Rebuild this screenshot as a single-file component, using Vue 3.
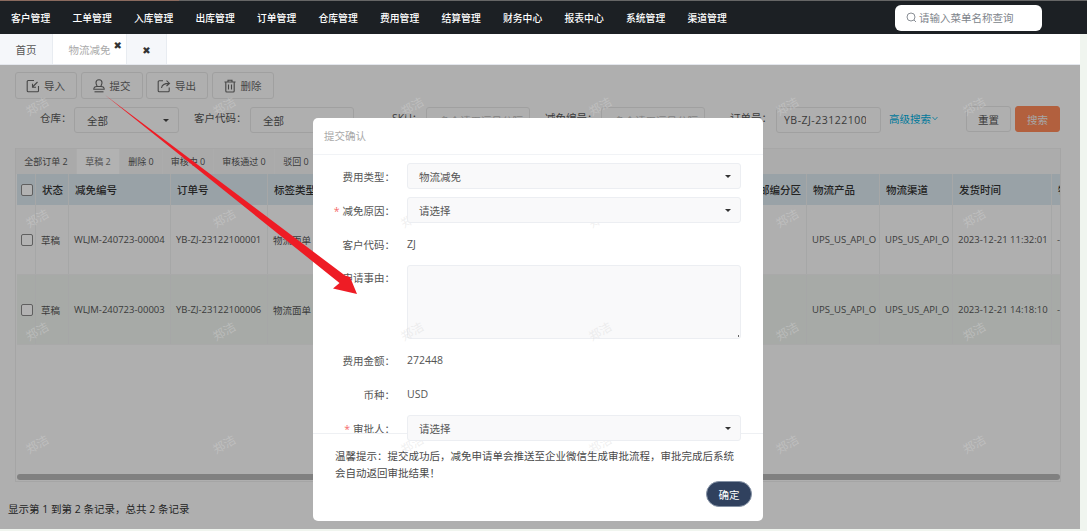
<script setup>
const menus = ['客户管理','工单管理','入库管理','出库管理','订单管理','仓库管理','费用管理','结算管理','财务中心','报表中心','系统管理','渠道管理']
const statusTabs = [
  { t: '全部订单 2', w: 60 }, { t: '草稿 2', w: 42, on: true }, { t: '删除 0', w: 42 },
  { t: '审核中 0', w: 50 }, { t: '审核通过 0', w: 60 }, { t: '驳回 0', w: 42 }
]
const cols = [
  { k: 'check', w: 19 }, { t: '状态', w: 33 }, { t: '减免编号', w: 102 }, { t: '订单号', w: 97 },
  { t: '标签类型', w: 77 }, { t: '', w: 130 }, { t: '', w: 130 }, { t: '', w: 127 },
  { t: '收件邮编分区', w: 75 }, { t: '物流产品', w: 73 }, { t: '物流渠道', w: 73 }, { t: '发货时间', w: 99 }, { t: '物', w: 20 }
]
const rows = [
  ['', '草稿', 'WLJM-240723-00004', 'YB-ZJ-23122100001', '物流面单', '', '', '', '', 'UPS_US_API_O', 'UPS_US_API_O', '2023-12-21 11:32:01', '-'],
  ['', '草稿', 'WLJM-240723-00003', 'YB-ZJ-23122100006', '物流面单', '', '', '', '', 'UPS_US_API_O', 'UPS_US_API_O', '2023-12-21 14:18:10', '-']
]
const marks = []
for (const y of [106, 218, 331, 444]) {
  for (const x of [37, 224, 412, 600, 787, 974]) marks.push({ x, y })
}
</script>

<template>
  <div class="page">
    <header class="topbar">
      <nav class="menu">
        <span v-for="m in menus" :key="m" class="menu-item">{{ m }}</span>
      </nav>
      <div class="search">
        <svg width="11" height="11" viewBox="0 0 11 11" fill="none" stroke="#8a8f96" stroke-width="1"><circle cx="5" cy="5" r="4"/><path d="M8 8l2 2"/></svg>
        <span>请输入菜单名称查询</span>
      </div>
    </header>

    <div class="tabs">
      <span class="tab tab-home">首页</span>
      <span class="tab tab-active">物流减免<b class="x x-a">✖</b></span>
      <span class="tab tab-x"><b class="x">✖</b></span>
    </div>

    <main class="main">
      <div class="toolbar">
        <button class="tool">
          <svg width="14" height="14" viewBox="0 0 14 14" fill="none" stroke="#666" stroke-width="1.1"><path d="M8 1.500H2.200a1 1 0 0 0-1 1v9.300a1 1 0 0 0 1 1h9.300a1 1 0 0 0 1-1V7"/><path d="M11.500 3L6.500 8M6.500 4.800V8.300H10"/></svg>
          导入
        </button>
        <button class="tool">
          <svg width="14" height="14" viewBox="0 0 14 14" fill="none" stroke="#666" stroke-width="1.1"><path d="M5 7.500C5 6 4 5.500 4 3.800a3 3 0 0 1 6 0C10 5.500 9 6 9 7.500"/><path d="M1.800 10.300c0-1.700 1.200-2.800 3.200-2.800h4c2 0 3.200 1.100 3.200 2.800z"/><path d="M2.500 12.800h9"/></svg>
          提交
        </button>
        <button class="tool">
          <svg width="14" height="14" viewBox="0 0 14 14" fill="none" stroke="#666" stroke-width="1.1"><path d="M6 1.800H2.200a1 1 0 0 0-1 1v9a1 1 0 0 0 1 1h9a1 1 0 0 0 1-1V8.500"/><path d="M4.500 9c.5-3 3-4.600 7.500-4.600M9.500 1.700L12.500 4.400 9.500 7"/></svg>
          导出
        </button>
        <button class="tool">
          <svg width="14" height="14" viewBox="0 0 14 14" fill="none" stroke="#666" stroke-width="1.1"><path d="M1.500 3h11M5 3V1.300h4V3M2.800 3v9a1 1 0 0 0 1 1h6.400a1 1 0 0 0 1-1V3M5.500 5.500v5M8.500 5.500v5"/></svg>
          删除
        </button>
      </div>

      <div class="filters">
        <div class="field"><label class="l1">仓库&#xFF1A;</label><div class="box w105">全部<i class="caret"></i></div></div>
        <div class="field"><label class="l2">客户代码&#xFF1A;</label><div class="box w104">全部<i class="caret"></i></div></div>
        <div class="field"><label class="l3">SKU&#xFF1A;</label><div class="box w104 ph">多个请用逗号分隔</div></div>
        <div class="field"><label class="l2">减免编号&#xFF1A;</label><div class="box w104 ph">多个请用逗号分隔</div></div>
        <div class="field"><label class="l4">订单号&#xFF1A;</label><div class="box w105 clip"><span class="clip-in">YB-ZJ-23122100001</span></div></div>
        <a class="adv">高级搜索<svg width="6" height="5" viewBox="0 0 6 5" fill="none" stroke="#00aede" stroke-width=".8"><path d="M.5 1L3 3.800 5.500 1"/></svg></a>
        <div class="actions">
          <button class="btn">重置</button>
          <button class="btn primary">搜索</button>
        </div>
      </div>

      <section class="card">
        <div class="status-tabs">
          <span v-for="s in statusTabs" :key="s.t" class="stab" :class="{ on: s.on }" :style="{ width: s.w + 'px' }">{{ s.t }}</span>
        </div>
        <div class="table">
          <div class="tr th">
            <div v-for="(c, i) in cols" :key="i" class="cell" :style="{ width: c.w + 'px' }">
              <i v-if="c.k" class="chk"></i>{{ c.t }}
            </div>
          </div>
          <div v-for="(r, ri) in rows" :key="ri" class="tr td" :class="{ alt: ri === 1 }">
            <div v-for="(c, i) in cols" :key="i" class="cell" :style="{ width: c.w + 'px' }">
              <i v-if="c.k" class="chk"></i>{{ r[i] }}
            </div>
          </div>
        </div>
        <div class="thumb"></div>
      </section>

      <div class="pager">显示第 1 到第 2 条记录&#xFF0C;总共 2 条记录</div>
      <div class="mask"></div>
    </main>

    <div class="modal">
      <div class="m-head">提交确认</div>
      <div class="m-body">
        <div class="row"><label>费用类型&#xFF1A;</label><div class="sel">物流减免<i class="caret"></i></div></div>
        <div class="row"><label><em>*</em>减免原因&#xFF1A;</label><div class="sel">请选择<i class="caret"></i></div></div>
        <div class="row"><label>客户代码&#xFF1A;</label><div class="val">ZJ</div></div>
        <div class="row top"><label>申请事由&#xFF1A;</label><textarea class="area"></textarea></div>
        <div class="row"><label>费用金额&#xFF1A;</label><div class="val">272448</div></div>
        <div class="row"><label>币种&#xFF1A;</label><div class="val">USD</div></div>
        <div class="row"><label><em>*</em>审批人&#xFF1A;</label><div class="sel">请选择<i class="caret"></i></div></div>
      </div>
      <div class="m-foot">
        <p>温馨提示&#xFF1A;提交成功后&#xFF0C;减免申请单会推送至企业微信生成审批流程&#xFF0C;审批完成后系统会自动返回审批结果&#xFF01;</p>
        <div class="m-actions"><button class="ok">确定</button></div>
      </div>
    </div>

    <div class="wm-layer">
      <span v-for="(m, i) in marks" :key="i" class="wm" :style="{ left: m.x + 'px', top: m.y + 'px' }">郑洁</span>
    </div>

    <svg class="arrow" width="1087" height="531" viewBox="0 0 1087 531">
      <polygon points="105,95 345,275.500 350,277 357,294 333,288.500 339.500,283" fill="#ee1c25"/>
    </svg>
  </div>
</template>

<style>
html, body { margin: 0; background: #fff; overflow: hidden; }
</style>

<style scoped>
.page {
  position: relative; width: 1087px; height: 531px; overflow: hidden; background: #f0f5ef;
  font-family: "Open Sans", "Noto Sans CJK SC", sans-serif; font-size: 10.5px; color: #555;
  display: flex; flex-direction: column;
}
.topbar {
  height: 33px; background: #1c2024; border-top: 1px solid #666; border-image: linear-gradient(90deg, #8a6a5e 180px, #666 180px) 1;
  display: flex; align-items: center;
  justify-content: space-between; padding: 0 45px 0 11px; flex: none;
}
.menu { display: flex; gap: 21.500px; }
.menu-item { color: #fff; font-size: 9.800px; font-weight: 500; width: 40px; white-space: nowrap; }
.search {
  width: 147px; height: 26px; box-sizing: border-box; background: #fff; border-radius: 6px;
  display: flex; align-items: center; gap: 2px; padding-left: 11px; color: #80858c; font-size: 10.500px;
}
.tabs { height: 30px; background: #fff; border-bottom: 1px solid #e4e7ed; display: flex; flex: none; width: 1080px; }
.tab { position: relative; box-sizing: border-box; height: 30px; display: flex; align-items: center; justify-content: center; background: #f5f7fa; border-right: 1px solid #e8ecf1; }
.tab-home { width: 53px; color: #555; }
.tab-active { width: 74px; background: #fff; color: #aaa; }
.tab-x { width: 40px; padding-top: 4px; }
.x { font-size: 10px; color: #333; line-height: 1; font-family: "DejaVu Sans", sans-serif; }
.x-a { position: absolute; right: 4px; top: 7px; }

.main { position: relative; flex: none; width: 1080px; height: 464px; background: #fbfbfb; }
.mask { position: absolute; inset: 0; background: rgba(0,0,0,.3); }
.toolbar { display: flex; gap: 3.500px; padding: 7px 0 0 15px; }
.tool {
  width: 62px; height: 27px; box-sizing: border-box; display: flex; align-items: center; justify-content: center; gap: 4px;
  background: transparent; border: 1px solid #e6e6e6; border-radius: 3px; font: inherit; color: #666; padding: 0 1px 0 0;
}
.filters { display: flex; align-items: center; padding: 8px 20px 0 15px; height: 26px; }
.field { display: flex; align-items: center; }
.field label { text-align: left; padding-right: 0; box-sizing: border-box; white-space: nowrap; color: #555; margin-top: -5px; }
.l1 { width: 59px; padding-left: 25px; }
.l2 { width: 71px; padding-left: 15px; }
.l3 { width: 72px; padding-left: 38px; }
.l4 { width: 71px; padding-left: 25px; }
.box {
  position: relative; height: 26px; box-sizing: border-box; border: 1px solid #e6e6e6; border-radius: 3px;
  padding: 0 12px; display: flex; align-items: center; white-space: nowrap; overflow: hidden; color: #555;
}
.w105 { width: 105px; } .w104 { width: 104px; }
.ph { color: #bbb; }
.clip { padding: 0 7px; }
.clip-in { display: block; width: 82px; overflow: hidden; letter-spacing: .5px; }
.caret { position: absolute; right: 9px; top: 50%; margin-top: -1.500px; border: 3px solid transparent; border-top: 3.500px solid #444; border-bottom: 0; }
.adv { margin-left: 8px; color: #00aede; display: flex; align-items: center; gap: 1px; white-space: nowrap; margin-top: -3px; }
.actions { margin-left: auto; display: flex; gap: 4px; margin-top: -2px; }
.btn { width: 45px; height: 26px; box-sizing: border-box; background: transparent; border: 1px solid #e6e6e6; border-radius: 3px; font: inherit; color: #555; padding: 0; }
.primary { background: #ff8a5a; border-color: #ff8a5a; color: #eee; }

.card {
  margin: 15px 19px 0 15px; height: 334px; box-sizing: border-box; border: 1px solid #ececec; border-top-width: 0;
  display: flex; flex-direction: column; overflow: hidden; background: #fbfbfb;
}
.status-tabs { display: flex; height: 26px; flex: none; gap: 1px; background: #f6f6f6; border-top: 1px solid #efefef; box-sizing: border-box; }
.stab { box-sizing: border-box; display: flex; align-items: center; justify-content: center; font-size: 9px; white-space: nowrap; background: #f4f4f4; color: #555; }
.stab.on { background: #fff; color: #777; }
.table { flex: 1; padding-left: 1px; overflow: hidden; }
.tr { display: flex; align-items: stretch; white-space: nowrap; }
.th { height: 31px; background: #dce9f0; font-size: 10.500px; color: #333; font-weight: 500; }
.td { height: 70px; background: #fbfbfb; font-size: 9.500px; color: #555; border-bottom: 1px solid #f2f2f2; box-sizing: border-box; }
.td.alt { background: #eff4f0; }
.cell { flex: none; box-sizing: border-box; display: flex; align-items: center; padding-left: 5px; border-right: 1px solid #eef0f0; overflow: hidden; }
.th .cell { padding-left: 6px; }
.cell:first-child { padding-left: 4px; }
.chk { display: block; width: 10px; height: 10px; border: 1px solid #888; border-radius: 2px; background: #fff; flex: none; }
.thumb { height: 6px; flex: none; background: #b8b8b8; border-radius: 3px; margin: 0 0 1px 1px; }
.pager { margin: 19px 0 0 8px; font-size: 10.500px; color: #333; white-space: nowrap; }

.modal {
  position: absolute; left: 313px; top: 118px; width: 450px; height: 403px; background: #fff; border-radius: 5px;
  display: flex; flex-direction: column;
}
.m-head { height: 37px; box-sizing: border-box; border-bottom: 1px solid #f1f3f6; padding: 0 11px 1px; display: flex; align-items: center; color: #aaa; flex: none; }
.m-body { height: 278px; flex: none; box-sizing: border-box; padding-top: 8px; display: flex; flex-direction: column; gap: 8px; }
.row { display: flex; align-items: center; min-height: 26px; flex: none; }
.row.top { align-items: flex-start; }
.row.top label { padding-top: 5px; }
.row label { width: 82px; text-align: right; padding-right: 12px; flex: none; box-sizing: content-box; color: #555; white-space: nowrap; }
.row em { color: #f56c6c; font-style: normal; margin-right: 3px; }
.sel {
  position: relative; z-index: 1; width: 334px; height: 26px; box-sizing: border-box; background: #f9f9fa; border: 1px solid #eceef2; border-radius: 3px;
  display: flex; align-items: center; padding-left: 11px; color: #555;
}
.sel .caret { border-top-color: #333; }
.val { color: #555; }
.area {
  width: 334px; height: 74px; box-sizing: border-box; border: 1px solid #eceef2; border-radius: 3px; margin: 0; display: block; resize: none;
  background: linear-gradient(#666, #666) no-repeat right 1px bottom 1px / 1px 2px, #f9f9fa;
}
.m-foot { flex: 1; box-sizing: border-box; border-top: 1px solid #eef0f3; padding: 14px 23px 0 22px; }
.m-foot p { margin: 0; line-height: 16.500px; color: #4a4a4a; }
.m-actions { display: flex; justify-content: flex-end; margin-right: -12px; }
.ok { width: 46px; height: 26px; background: #30415e; color: #fff; border: 1px solid #8592a5; border-radius: 13px; font: inherit; padding: 0; }

.wm-layer { position: absolute; inset: 0; pointer-events: none; }
.wm { position: absolute; transform: translate(-50%,-50%) rotate(-30deg); font-size: 12px; color: rgba(215,215,215,.4); white-space: nowrap; }
.arrow { position: absolute; left: 0; top: 0; pointer-events: none; }
</style>
